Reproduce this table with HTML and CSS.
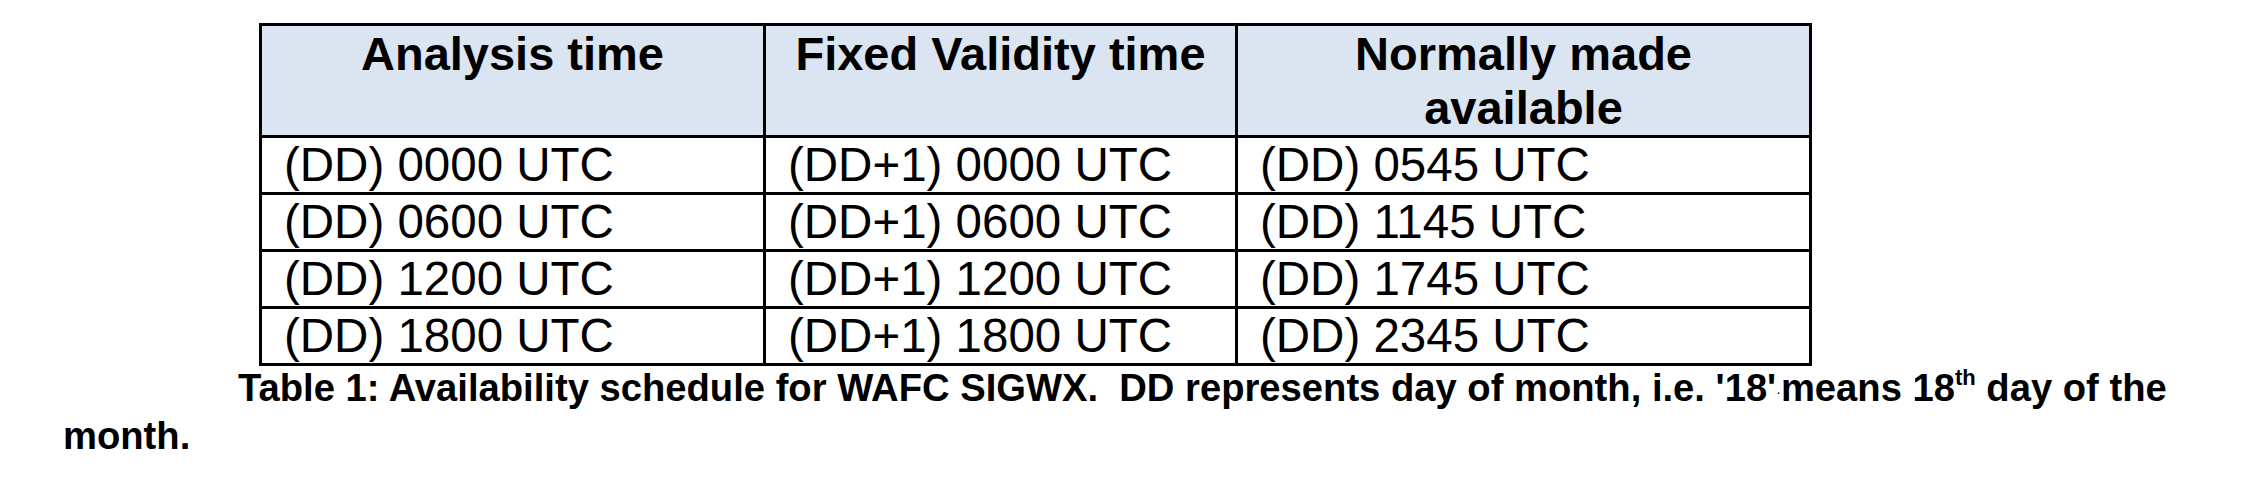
FILE: index.html
```html
<!DOCTYPE html>
<html>
<head>
<meta charset="utf-8">
<link rel="stylesheet" href="styles.css">
</head>
<body>
<div class="page">
  <table class="schedule">
    <thead>
      <tr>
        <th class="c1">Analysis time</th>
        <th class="c2">Fixed Validity time</th>
        <th class="c3">Normally made available</th>
      </tr>
    </thead>
    <tbody>
      <tr><td>(DD) 0000 UTC</td><td>(DD+1) 0000 UTC</td><td>(DD) 0545 UTC</td></tr>
      <tr><td>(DD) 0600 UTC</td><td>(DD+1) 0600 UTC</td><td>(DD) 1145 UTC</td></tr>
      <tr><td>(DD) 1200 UTC</td><td>(DD+1) 1200 UTC</td><td>(DD) 1745 UTC</td></tr>
      <tr><td>(DD) 1800 UTC</td><td>(DD+1) 1800 UTC</td><td>(DD) 2345 UTC</td></tr>
    </tbody>
  </table>
  <p class="caption">Table 1: Availability schedule for WAFC SIGWX.&nbsp; DD represents day of month, i.e. '18'<span class="dot">·</span>means 18<sup>th</sup> day of the month.</p>
</div>
</body>
</html>
```

FILE: styles.css
```css
html, body {
  margin: 0;
  padding: 0;
  background: #ffffff;
}

body {
  font-family: "Liberation Sans", Arial, sans-serif;
  color: #000000;
}

.page {
  width: 2256px;
  height: 494px;
  padding-top: 23px;
  box-sizing: border-box;
}

.schedule {
  margin-left: 259px;
  border-collapse: separate;
  border-spacing: 0;
  table-layout: fixed;
  border-top: 3px solid #000;
  border-left: 3px solid #000;
}

.schedule th,
.schedule td {
  box-sizing: border-box;
  border-right: 3px solid #000;
  border-bottom: 3px solid #000;
  padding: 0;
  font-size: 47.5px;
}

.schedule th {
  background: #dbe5f1;
  font-weight: bold;
  font-size: 47px;
  text-align: center;
  vertical-align: top;
  line-height: 54px;
  height: 112px;
  padding: 1px 20px 0;
}

.schedule .c1 { width: 504px; }
.schedule .c2 { width: 472px; }
.schedule .c3 { width: 574px; }

.schedule td {
  font-weight: normal;
  text-align: left;
  line-height: 54px;
  height: 57px;
  padding-left: 22px;
  white-space: nowrap;
}

.caption {
  margin: 0;
  margin-left: 63px;
  width: 2150px;
  text-indent: 175px;
  font-weight: bold;
  font-size: 38.2px;
  line-height: 44px;
}

.caption .dot {
  font-size: 14px;
  font-weight: normal;
  vertical-align: 4px;
}

.caption sup {
  font-size: 22px;
  line-height: 0;
  vertical-align: 16px;
}
```
